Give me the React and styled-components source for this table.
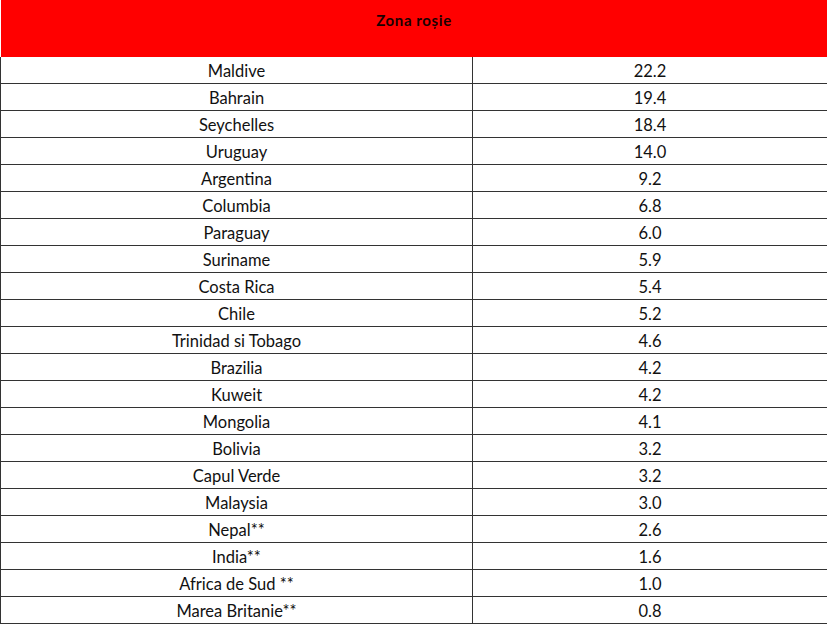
import React from 'react';
import styled, { createGlobalStyle } from 'styled-components';

const rows = [
  ['Maldive', '22.2'],
  ['Bahrain', '19.4'],
  ['Seychelles', '18.4'],
  ['Uruguay', '14.0'],
  ['Argentina', '9.2'],
  ['Columbia', '6.8'],
  ['Paraguay', '6.0'],
  ['Suriname', '5.9'],
  ['Costa Rica', '5.4'],
  ['Chile', '5.2'],
  ['Trinidad si Tobago', '4.6', true],
  ['Brazilia', '4.2'],
  ['Kuweit', '4.2'],
  ['Mongolia', '4.1'],
  ['Bolivia', '3.2'],
  ['Capul Verde', '3.2'],
  ['Malaysia', '3.0'],
  ['Nepal**', '2.6'],
  ['India**', '1.6'],
  ['Africa de Sud **', '1.0'],
  ['Marea Britanie**', '0.8'],
];

const Global = createGlobalStyle`
  body {
    margin: 0;
    background: #fff;
    font-family: Lato, "Liberation Sans", sans-serif;
    color: #111;
  }
`;

const Table = styled.table`
  width: 827px;
  border-collapse: collapse;
  table-layout: fixed;
`;

const Header = styled.th`
  height: 46px;
  padding: 11px 0 0;
  vertical-align: top;
  background: #ff0000;
  color: #1a0000;
  font-size: 15px;
  letter-spacing: 0.6px;
  font-weight: 700;
  text-align: center;
`;

const Cell = styled.td`
  height: ${({ $tall }) => ($tall ? 27 : 26)}px;
  padding: 2px 0 0;
  border-left: 1px solid #333;
  border-right: 1px solid #333;
  border-bottom: 1px solid #333;
  text-align: center;
  vertical-align: middle;
  font-size: 16.5px;
  line-height: 24px;
  box-sizing: border-box;
`;

export default function App() {
  return (
    <>
      <Global />
      <Table>
        <colgroup>
          <col style={{ width: 472 }} />
          <col style={{ width: 355 }} />
        </colgroup>
        <thead>
          <tr>
            <Header colSpan={2}>Zona roșie</Header>
          </tr>
        </thead>
        <tbody>
          {rows.map(([country, value, tall]) => (
            <tr key={country}>
              <Cell $tall={tall}>{country}</Cell>
              <Cell $tall={tall}>{value}</Cell>
            </tr>
          ))}
        </tbody>
      </Table>
    </>
  );
}
